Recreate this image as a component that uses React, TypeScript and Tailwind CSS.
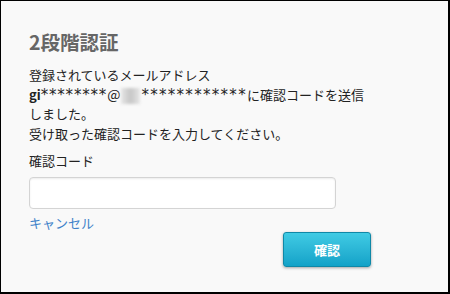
export default function App() {
  return (
    <div
      className="w-[450px] h-[294px] bg-[#f9f9f9] border-l border-t border-r-2 border-b-2 border-black pl-[28px] pt-[29px] text-[#222]"
      style={{ fontFamily: '"Noto Sans CJK JP", "Noto Sans", sans-serif' }}
    >
      <h1 className="text-[19.5px] leading-[24px] font-bold text-[#666]">2段階認証</h1>

      <p className="mt-[11px] text-[13px] leading-[19.5px]">
        登録されているメールアドレス
        <br />
        <span className="font-bold">gi</span>
        <span className="text-[15px] leading-none tracking-[0.8px] font-['DejaVu_Sans',sans-serif]">********</span>
        <span className="text-[14px]">@</span>
        <span className="inline-block w-[19px] h-[16px] align-[-4px] mx-[1px] bg-gradient-to-r from-[#e6e6e6] via-[#c6c6c6] to-[#e6e6e6] blur-[1.5px]" />
        <span className="text-[15px] leading-none tracking-[1.3px] font-['DejaVu_Sans',sans-serif]">************</span>
        に確認コードを送信
        <br />
        しました。
        <br />
        受け取った確認コードを入力してください。
      </p>

      <label className="block mt-[8px] text-[13px] leading-[19.5px]">確認コード</label>
      <input
        type="text"
        className="block mt-[6px] w-[307px] h-[32px] bg-white border border-[#d4d4d4] rounded-[4px] shadow-[inset_0_1px_2px_rgba(0,0,0,0.08)] outline-none"
      />

      <a href="#" className="block mt-[4px] w-fit text-[13px] leading-[19.5px] text-[#3f82c9]">
        キャンセル
      </a>

      <div className="w-[342px] flex justify-end">
        <button className="w-[88px] h-[35px] rounded-[3px] border border-[#0f88a7] bg-gradient-to-b from-[#3fcbe4] to-[#11a2c8] text-white text-[13px] font-bold shadow-[0_1px_3px_rgba(0,0,0,0.35)]">
          確認
        </button>
      </div>
    </div>
  );
}
